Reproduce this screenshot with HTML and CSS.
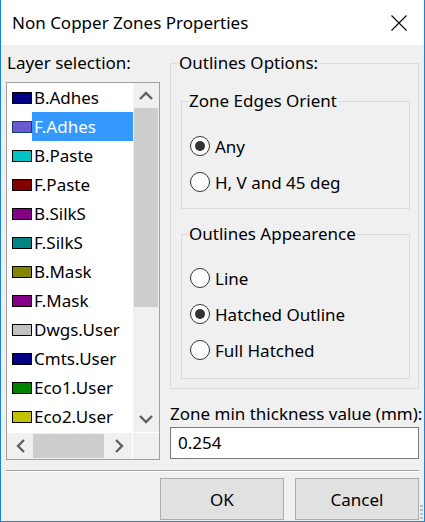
FILE: index.html
```html
<!DOCTYPE html>
<html>
<head>
<meta charset="utf-8">
<link rel="stylesheet" href="styles.css">
</head>
<body>
<div class="window">
  <div class="titlebar">
    <span class="title">Non Copper Zones Properties</span>
    <svg class="close" width="16" height="16" viewBox="0 0 16 16"><path d="M0.5 0.5 L15.5 15.5 M15.5 0.5 L0.5 15.5" stroke="#000" stroke-width="1.1" fill="none"/></svg>
  </div>
  <div class="body">
    <div class="main">
      <div class="leftcol">
        <div class="label">Layer selection:</div>
        <div class="listbox">
          <div class="items">
            <div class="item"><span class="sw" style="background:#000084"></span><span class="txt">B.Adhes</span></div>
            <div class="item"><span class="sw sel-sw" style="background:#6a5acd"></span><span class="txt selected">F.Adhes</span></div>
            <div class="item"><span class="sw" style="background:#00c2c2"></span><span class="txt">B.Paste</span></div>
            <div class="item"><span class="sw" style="background:#840000"></span><span class="txt">F.Paste</span></div>
            <div class="item"><span class="sw" style="background:#840084"></span><span class="txt">B.SilkS</span></div>
            <div class="item"><span class="sw" style="background:#008484"></span><span class="txt">F.SilkS</span></div>
            <div class="item"><span class="sw" style="background:#848400"></span><span class="txt">B.Mask</span></div>
            <div class="item"><span class="sw" style="background:#840084"></span><span class="txt">F.Mask</span></div>
            <div class="item"><span class="sw" style="background:#c2c2c2"></span><span class="txt">Dwgs.User</span></div>
            <div class="item"><span class="sw" style="background:#000084"></span><span class="txt">Cmts.User</span></div>
            <div class="item"><span class="sw" style="background:#008400"></span><span class="txt">Eco1.User</span></div>
            <div class="item"><span class="sw" style="background:#c2c200"></span><span class="txt">Eco2.User</span></div>
          </div>
          <div class="vscroll">
            <div class="arrow"><svg width="14" height="9" viewBox="0 0 14 9"><path d="M1 8 L7 2 L13 8" stroke="#606060" stroke-width="2.4" fill="none"/></svg></div>
            <div class="vthumb"></div>
            <div class="vtrack"></div>
            <div class="arrow"><svg width="14" height="9" viewBox="0 0 14 9"><path d="M1 1 L7 7 L13 1" stroke="#606060" stroke-width="2.4" fill="none"/></svg></div>
          </div>
          <div class="hscroll">
            <div class="harrow"><svg width="9" height="14" viewBox="0 0 9 14"><path d="M8 1 L2 7 L8 13" stroke="#606060" stroke-width="2.4" fill="none"/></svg></div>
            <div class="hthumb"></div>
            <div class="htrack"></div>
            <div class="harrow"><svg width="9" height="14" viewBox="0 0 9 14"><path d="M1 1 L7 7 L1 13" stroke="#606060" stroke-width="2.4" fill="none"/></svg></div>
          </div>
          <div class="corner"></div>
        </div>
      </div>
      <div class="rightcol">
        <fieldset class="outer">
          <legend>Outlines Options:</legend>
          <fieldset class="inner inner1">
            <legend>Zone Edges Orient</legend>
            <div class="radios">
              <div class="radio"><span class="dot on"></span><span>Any</span></div>
              <div class="radio"><span class="dot"></span><span>H, V and 45 deg</span></div>
            </div>
          </fieldset>
          <fieldset class="inner inner2">
            <legend>Outlines Appearence</legend>
            <div class="radios">
              <div class="radio"><span class="dot"></span><span>Line</span></div>
              <div class="radio"><span class="dot on"></span><span>Hatched Outline</span></div>
              <div class="radio"><span class="dot"></span><span>Full Hatched</span></div>
            </div>
          </fieldset>
        </fieldset>
        <div class="label thick">Zone min thickness value (mm):</div>
        <div class="input">0.254</div>
      </div>
    </div>
    <div class="sep"></div>
    <div class="buttons">
      <div class="btn">OK</div>
      <div class="btn">Cancel</div>
    </div>
    <div class="grip"></div>
  </div>
</div>
</body>
</html>
```
FILE: styles.css
```css
* { box-sizing: border-box; }
html, body { margin: 0; padding: 0; }
body {
  width: 425px;
  height: 522px;
  overflow: hidden;
  font-family: "Noto Sans", "DejaVu Sans", sans-serif;
  font-size: 17px;
  color: #000;
  background: #fff;
}
.window {
  width: 425px;
  height: 522px;
  border-left: 1px solid #1883d7;
  border-right: 1px solid #1883d7;
  border-bottom: 1px solid #1883d7;
  display: flex;
  flex-direction: column;
}
.titlebar {
  height: 45px;
  background: #fff;
  display: flex;
  align-items: center;
  justify-content: space-between;
  padding: 0 17px 0 11px;
}
.title {
  font-size: 17px;
  line-height: 24px;
  padding-top: 1px;
}
.close { display: block; margin-top: 1px; }
.body {
  flex: 1;
  background: #f0f0f0;
  padding: 8px 5px 1px 5px;
  display: flex;
  flex-direction: column;
  position: relative;
}
.main {
  display: flex;
  gap: 10px;
}
.leftcol {
  width: 154px;
  display: flex;
  flex-direction: column;
}
.label {
  line-height: 20px;
  height: 20px;
  white-space: nowrap;
  padding-left: 1px;
}
.listbox {
  margin-top: 9px;
  height: 378px;
  border: 1px solid #a0a0a0;
  background: #fff;
  display: grid;
  grid-template-columns: 126px 26px;
  grid-template-rows: 350px 26px;
  overflow: hidden;
}
.items {
  overflow: hidden;
}
.item {
  height: 29px;
  display: flex;
  align-items: center;
  padding-left: 5px;
  white-space: nowrap;
}
.sw {
  width: 20px;
  height: 12px;
  border: 1px solid #000;
  flex: none;
}
.sel-sw { border-color: #1c3a70; }
.txt {
  height: 29px;
  line-height: 29px;
  padding-left: 2px;
  padding-right: 4px;
  flex: 1;
}
.selected {
  background: #3399ff;
  color: #fff;
}
.vscroll {
  background: #f0f0f0;
  display: flex;
  flex-direction: column;
  border-bottom: 1px solid #fff;
}
.arrow {
  height: 25px;
  display: flex;
  align-items: center;
  justify-content: center;
  flex: none;
}
.vthumb {
  height: 199px;
  background: #cdcdcd;
  margin: 0 1px;
  flex: none;
}
.vtrack { flex: 1; }
.hscroll {
  background: #f0f0f0;
  display: flex;
  border-right: 1px solid #fff;
}
.harrow {
  width: 26px;
  display: flex;
  align-items: center;
  justify-content: center;
  flex: none;
}
.hthumb {
  width: 71px;
  background: #cdcdcd;
  margin: 1px 0;
  flex: none;
}
.htrack { flex: 1; }
.corner { background: #f0f0f0; }
.rightcol {
  width: 249px;
  display: flex;
  flex-direction: column;
}
fieldset {
  margin: 0;
  min-width: 0;
  border: 1px solid #dcdcdc;
}
legend {
  padding: 0 1px;
  line-height: 20px;
  margin-left: -3px;
  white-space: nowrap;
}
.outer {
  padding: 18px 8px 9px 10px;
  height: 336px;
}
.inner1 { padding: 25px 8px 16px 8px; }
.inner2 { padding: 24px 8px 18px 8px; margin-top: 15px; }
.inner legend { margin-left: -2px; }
.radios {
  display: flex;
  flex-direction: column;
  gap: 16px;
}
.radio {
  height: 20px;
  display: flex;
  align-items: center;
  gap: 5px;
  white-space: nowrap;
}
.dot {
  width: 20px;
  height: 20px;
  border: 1px solid #333;
  border-radius: 50%;
  background: #fff;
  display: flex;
  align-items: center;
  justify-content: center;
  flex: none;
}
.dot.on::after {
  content: "";
  width: 10px;
  height: 10px;
  border-radius: 50%;
  background: #333;
}
.thick { margin-top: 15px; padding-left: 0; }
.input {
  margin-top: 3px;
  height: 32px;
  border: 1px solid #7a7a7a;
  background: #fff;
  padding-left: 7px;
  line-height: 30px;
}
.sep {
  margin-top: 10px;
  height: 2px;
  border-top: 1px solid #a0a0a0;
  border-bottom: 1px solid #fff;
}
.buttons {
  margin-top: 6px;
  display: flex;
  justify-content: flex-end;
  gap: 11px;
}
.btn {
  width: 124px;
  height: 42px;
  background: #e1e1e1;
  border: 1px solid #adadad;
  display: flex;
  align-items: center;
  justify-content: center;
}
.grip {
  position: absolute;
  right: 1px;
  bottom: 2px;
  width: 3px;
  height: 14px;
  background: repeating-linear-gradient(to bottom, #bcbcbc 0 2px, transparent 2px 4px);
}
```
